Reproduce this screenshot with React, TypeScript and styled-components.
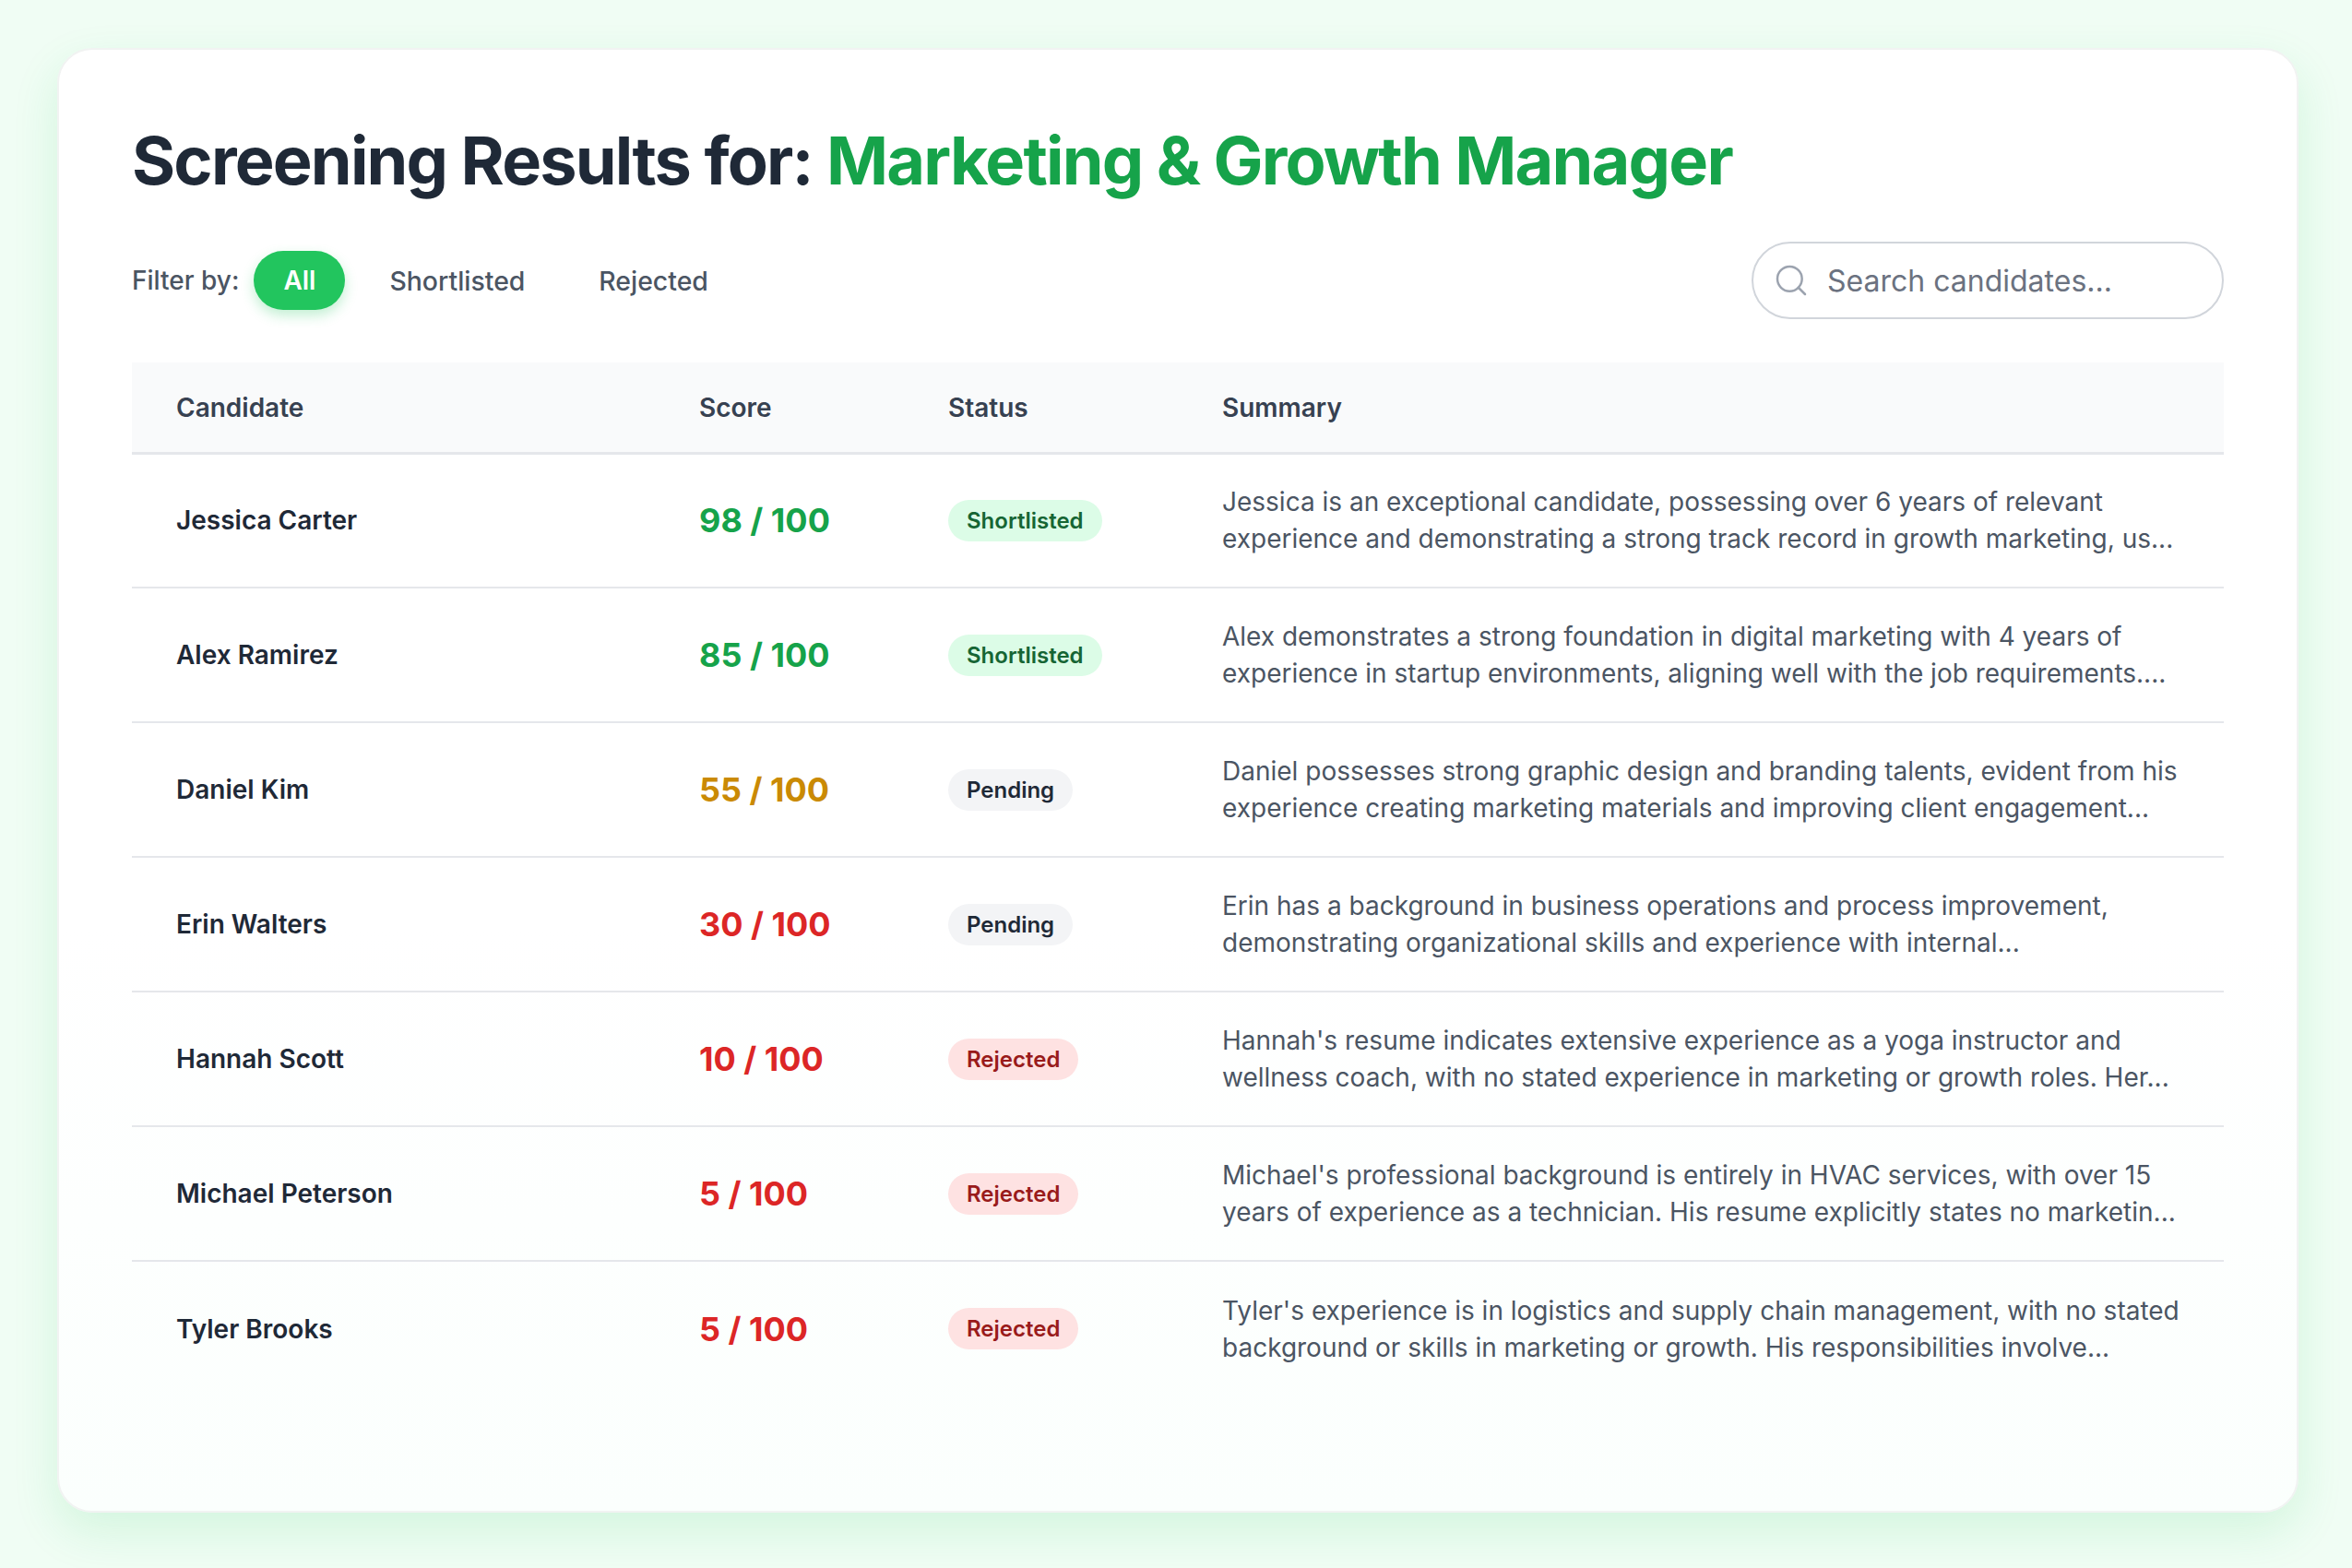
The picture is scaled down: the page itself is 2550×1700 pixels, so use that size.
import React from 'react'
import styled, { createGlobalStyle } from 'styled-components'

type Tone = 'green' | 'amber' | 'red'
type Status = 'Shortlisted' | 'Pending' | 'Rejected'

const candidates: { name: string; score: number; tone: Tone; status: Status; summary: string }[] = [
  { name: 'Jessica Carter', score: 98, tone: 'green', status: 'Shortlisted', summary: 'Jessica is an exceptional candidate, possessing over 6 years of relevant experience and demonstrating a strong track record in growth marketing, us...' },
  { name: 'Alex Ramirez', score: 85, tone: 'green', status: 'Shortlisted', summary: 'Alex demonstrates a strong foundation in digital marketing with 4 years of experience in startup environments, aligning well with the job requirements....' },
  { name: 'Daniel Kim', score: 55, tone: 'amber', status: 'Pending', summary: 'Daniel possesses strong graphic design and branding talents, evident from his experience creating marketing materials and improving client engagement...' },
  { name: 'Erin Walters', score: 30, tone: 'red', status: 'Pending', summary: 'Erin has a background in business operations and process improvement, demonstrating organizational skills and experience with internal...' },
  { name: 'Hannah Scott', score: 10, tone: 'red', status: 'Rejected', summary: "Hannah's resume indicates extensive experience as a yoga instructor and wellness coach, with no stated experience in marketing or growth roles. Her..." },
  { name: 'Michael Peterson', score: 5, tone: 'red', status: 'Rejected', summary: "Michael's professional background is entirely in HVAC services, with over 15 years of experience as a technician. His resume explicitly states no marketin..." },
  { name: 'Tyler Brooks', score: 5, tone: 'red', status: 'Rejected', summary: "Tyler's experience is in logistics and supply chain management, with no stated background or skills in marketing or growth. His responsibilities involve..." },
]

const App = () => {
  return (
    <Page>
      <GlobalStyle />
      <Card>
        <Title>
          Screening Results for: <Accent>Marketing &amp; Growth Manager</Accent>
        </Title>
        <Toolbar>
          <Filters>
            <FilterLabel>Filter by:</FilterLabel>
            <FilterButton $active>All</FilterButton>
            <FilterButton>Shortlisted</FilterButton>
            <FilterButton>Rejected</FilterButton>
          </Filters>
          <SearchBox>
            <svg width="40" height="40" viewBox="0 0 24 24" fill="none" stroke="#9ca3af" strokeWidth="1.5" strokeLinecap="round">
              <circle cx="11" cy="11" r="8" />
              <path d="M21 21l-4.35-4.35" />
            </svg>
            <SearchInput placeholder="Search candidates..." />
          </SearchBox>
        </Toolbar>
        <Table>
          <colgroup>
            <col width="567" />
            <col width="270" />
            <col width="297" />
            <col />
          </colgroup>
          <thead>
            <tr>
              <Th>Candidate</Th>
              <Th>Score</Th>
              <Th>Status</Th>
              <Th>Summary</Th>
            </tr>
          </thead>
          <tbody>
            {candidates.map((c) => (
              <Row key={c.name}>
                <NameCell>{c.name}</NameCell>
                <ScoreCell $tone={c.tone}>{c.score} / 100</ScoreCell>
                <Td>
                  <Badge $status={c.status}>{c.status}</Badge>
                </Td>
                <SummaryCell>{c.summary}</SummaryCell>
              </Row>
            ))}
          </tbody>
        </Table>
      </Card>
    </Page>
  )
}

export default App

const toneColors: Record<Tone, string> = {
  green: '#16a34a',
  amber: '#ca8a04',
  red: '#dc2626',
}

const badgeColors: Record<Status, { bg: string; fg: string }> = {
  Shortlisted: { bg: '#dcfce7', fg: '#166534' },
  Pending: { bg: '#f3f4f6', fg: '#1f2937' },
  Rejected: { bg: '#fee2e2', fg: '#991b1b' },
}

const GlobalStyle = createGlobalStyle`
  html, body {
    margin: 0;
    padding: 0;
    background: #f0fdf4;
  }
  * {
    box-sizing: border-box;
  }
`
const Page = styled.div`
  width: 2550px;
  height: 1700px;
  padding: 52px 58px 60px 62px;
  background: #f0fdf4;
  font-family: Inter, "Liberation Sans", sans-serif;
  overflow: hidden;
`
const Card = styled.div`
  width: 2430px;
  height: 1588px;
  padding: 76px 79px 0 79px;
  border: 2px solid #f1f3f2;
  border-radius: 38px;
  background: linear-gradient(180deg, #ffffff 0%, #ffffff 60%, #fbfffd 100%);
  box-shadow: 0 20px 50px rgba(34, 197, 94, 0.14);
`
const Title = styled.h1`
  margin: 0;
  font-size: 72px;
  line-height: 88px;
  font-weight: 700;
  letter-spacing: -1.8px;
  color: #1f2937;
`
const Accent = styled.span`
  color: #16a34a;
`
const Toolbar = styled.div`
  display: flex;
  align-items: center;
  justify-content: space-between;
  margin-top: 44px;
  margin-bottom: 47px;
`
const Filters = styled.div`
  display: flex;
  align-items: center;
  gap: 16px;
`
const FilterLabel = styled.span`
  font-size: 28px;
  font-weight: 500;
  color: #4b5563;
`
const FilterButton = styled.button<{ $active?: boolean }>`
  height: 64px;
  padding: 0 32px;
  border: none;
  border-radius: 32px;
  font-family: inherit;
  font-size: ${(p) => (p.$active ? '28px' : '28.4px')};
  font-weight: ${(p) => (p.$active ? 600 : 500)};
  color: ${(p) => (p.$active ? '#ffffff' : '#4b5563')};
  background: ${(p) => (p.$active ? '#22c55e' : 'transparent')};
  box-shadow: ${(p) => (p.$active ? '0 6px 14px rgba(34, 197, 94, 0.28)' : 'none')};
`
const SearchBox = styled.div`
  display: flex;
  align-items: center;
  gap: 17px;
  width: 512px;
  height: 84px;
  padding: 0 21px;
  border: 2px solid #d1d5db;
  border-radius: 42px;
  background: #ffffff;
`
const SearchInput = styled.input`
  flex: 1;
  min-width: 0;
  border: none;
  outline: none;
  background: transparent;
  font-family: inherit;
  font-size: 32px;
  color: #1f2937;
  &::placeholder {
    color: #6b7280;
    opacity: 1;
  }
`
const Table = styled.table`
  width: 100%;
  border-collapse: collapse;
  table-layout: fixed;
`
const Th = styled.th`
  height: 98px;
  padding: 2px 48px 0;
  text-align: left;
  font-size: 28px;
  font-weight: 600;
  color: #374151;
  background: #f9fafb;
  border-bottom: 3px solid #e5e7eb;
`
const Row = styled.tr`
  height: 146px;
  border-bottom: 2px solid #e5e7eb;
  &:last-child {
    border-bottom: none;
  }
`
const Td = styled.td`
  padding: 0 48px;
  vertical-align: middle;
`
const NameCell = styled(Td)`
  font-size: 28px;
  font-weight: 600;
  color: #1f2937;
`
const ScoreCell = styled(Td)<{ $tone: Tone }>`
  font-size: 36px;
  font-weight: 700;
  color: ${(p) => toneColors[p.$tone]};
`
const SummaryCell = styled(Td)`
  padding-right: 40px;
  font-size: 28px;
  line-height: 40px;
  color: #4b5563;
`
const Badge = styled.span<{ $status: Status }>`
  display: inline-block;
  height: 45px;
  padding: 0 20px;
  border-radius: 23px;
  font-size: 24px;
  line-height: 45px;
  font-weight: 600;
  color: ${(p) => badgeColors[p.$status].fg};
  background: ${(p) => badgeColors[p.$status].bg};
`
